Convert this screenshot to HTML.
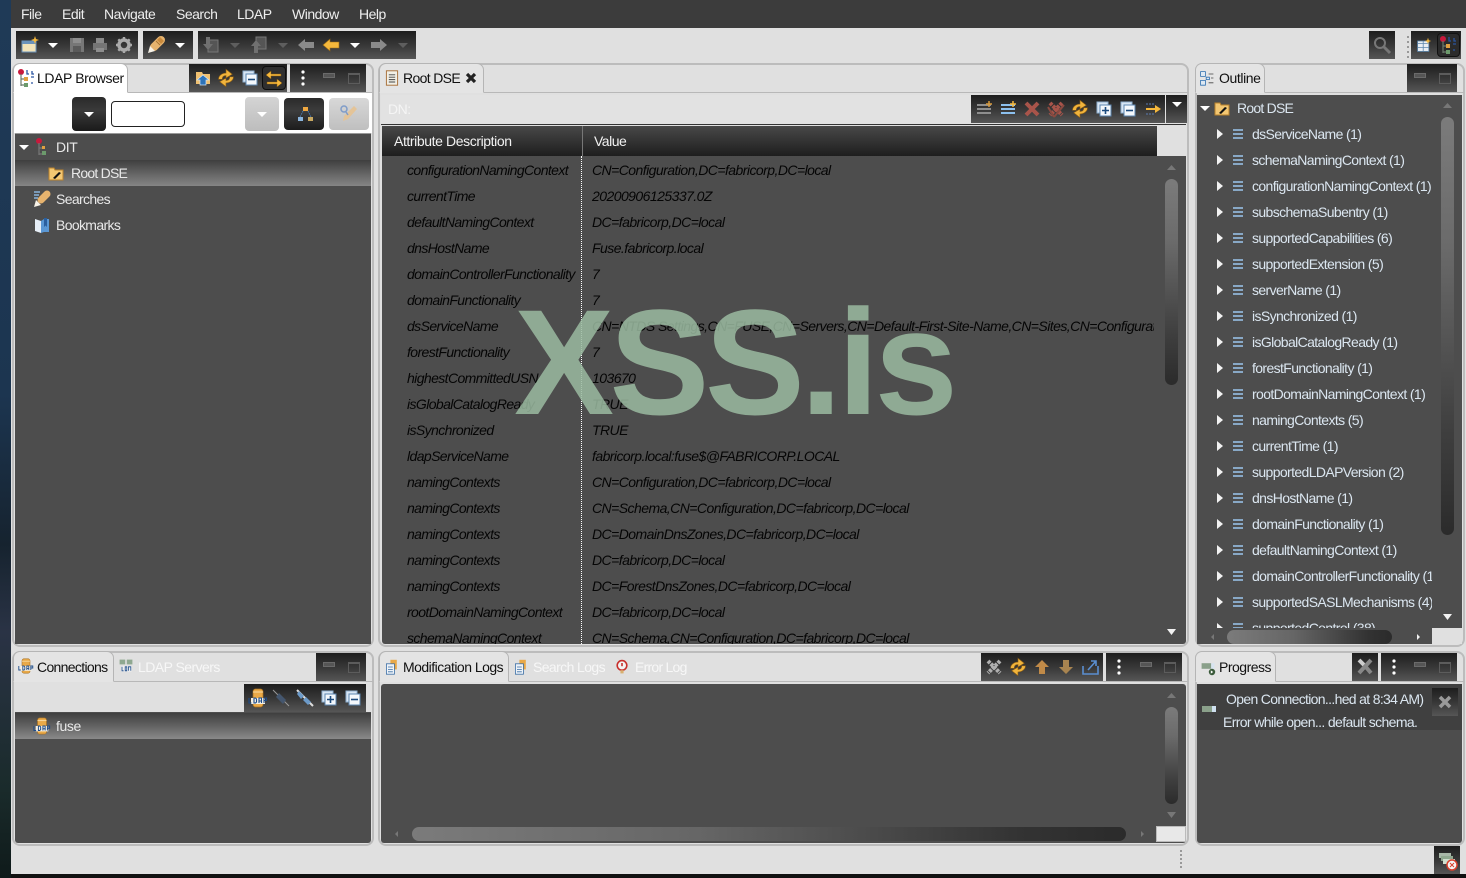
<!DOCTYPE html>
<html><head><meta charset="utf-8"><title>Apache Directory Studio</title>
<style>
html,body{margin:0;padding:0;width:1466px;height:878px;overflow:hidden;background:#111}
body{position:relative;font:14px/26px "Liberation Sans",sans-serif;letter-spacing:-.5px}
div,span,svg{position:absolute}
span{white-space:nowrap;height:26px}
.wall{left:0;top:0;width:11px;height:878px;background:linear-gradient(#1f3a57 0,#1c3550 45%,#16232f 62%,#2a3345 72%,#1a2b2b 90%,#0f1a1a 100%)}
.win{left:11px;top:0;width:1455px;height:874px;background:#e0e0e0}
.menu{left:11px;top:0;width:1455px;height:28px;background:#3c3c3c}
.m{color:#eee;top:1px}
.tb{background:linear-gradient(#1d1d1d,#3a3a3a 55%,#565656)}
.pn{border:2px solid #bcbcbc;border-radius:8px;box-sizing:border-box;background:#e0e0e0}
.tab{background:#e4e4e4;border:1px solid #b5b5b5;border-bottom:0;border-radius:7px 7px 0 0;box-sizing:border-box}
.line{background:#b8b8b8;height:1px}
.dk{background:#4d4d4d}
.k{color:#111;letter-spacing:-.6px}
.w{color:#e9e9e9;letter-spacing:-.65px}
.o{color:#dbe6f0;letter-spacing:-.62px}
.n{color:#050505;font-style:italic;left:407px;letter-spacing:-.6px}
.v{color:#050505;font-style:italic;left:592px;letter-spacing:-.55px}
.mn{width:10px;height:3px;border:1px solid #6a6a6a;background:#555}
.mx{width:10px;height:8px;border:1px solid #5c5c5c;border-top:2px solid #5c5c5c}
.sv{background:linear-gradient(#7b7b7b,#6b6b6b 30%,#3f3f3f 75%,#2b2b2b);border-radius:7px;width:13px}
.sh{background:linear-gradient(90deg,#7b7b7b,#666 40%,#333 85%,#2b2b2b);border-radius:7px;height:14px}
.ic{width:20px;height:20px;overflow:visible}
.s16{width:16px;height:16px}
.clip{overflow:hidden}
</style></head><body>
<svg width="0" height="0" style="left:0;top:0">
<defs>
<symbol id="dn" viewBox="0 0 20 20"><path d="M5 8h10l-5 5z" fill="#fff"/></symbol>
<symbol id="dg" viewBox="0 0 20 20"><path d="M5 8h10l-5 5z" fill="#5e5e5e"/></symbol>
<symbol id="rt" viewBox="0 0 20 20"><path d="M7 5l6 5-6 5z" fill="#f2f2f2"/></symbol>
<symbol id="ls" viewBox="0 0 20 20"><path d="M5 6h10M5 10h10M5 14h10" stroke="#9cc7ee" stroke-width="1.600"/></symbol>
<symbol id="fold" viewBox="0 0 20 20"><path d="M3 5h5l1 2h8v10H3z" fill="#f3c772" stroke="#b9822c"/><path d="M7 15l6-6 2 1-6 6z" fill="#111"/></symbol>
<symbol id="sync" viewBox="2 2 16 16"><path d="M4 11c0-3 3-5 6-5V3l5 4-5 3V8c-2 0-3 1-3 3zM16 9c0 3-3 5-6 5v3l-5-4 5-3v2c2 0 3-1 3-3z" fill="#f1b43c" stroke="#8a5c14" stroke-width=".5"/></symbol>
<symbol id="col" viewBox="0 0 20 20"><rect x="3" y="3" width="11" height="11" fill="#d8e6f4" stroke="#8fb0d0"/><rect x="6" y="6" width="11" height="11" fill="#f4f8fc" stroke="#5c86b0"/><path d="M8 11.500h7" stroke="#1c4b7e" stroke-width="1.600"/></symbol>
<symbol id="exp" viewBox="0 0 20 20"><rect x="3" y="3" width="11" height="11" fill="#d8e6f4" stroke="#8fb0d0"/><rect x="6" y="6" width="11" height="11" fill="#f4f8fc" stroke="#5c86b0"/><path d="M8 11.500h7M11.500 8v7" stroke="#1c4b7e" stroke-width="1.600"/></symbol>
<symbol id="vd" viewBox="0 0 6 20"><circle cx="3" cy="4" r="1.600" fill="#fff"/><circle cx="3" cy="10" r="1.600" fill="#fff"/><circle cx="3" cy="16" r="1.600" fill="#fff"/></symbol>
<symbol id="pen" viewBox="0 0 20 20"><path d="M15 5L8 12" stroke="#e6b36e" stroke-width="8" stroke-linecap="round"/><path d="M14 2l4 4-3 3-4-4z" fill="#c98a3c"/><path d="M4 11l5 5-7 2z" fill="#f7f2e8"/><path d="M10 6l4 4" stroke="#a87432"/></symbol>
<symbol id="ld" viewBox="0 0 20 20"><circle cx="5" cy="4" r="3" fill="#c8193c"/><path d="M5 6v12M5 11h6M5 17h5" stroke="#6b7a6b" stroke-width="1.200" fill="none"/><rect x="8" y="9" width="4" height="4" fill="#e0a040"/><rect x="8" y="15" width="4" height="4" fill="#6c9a6c"/><path d="M11 2v4h2M16 3v3h2M15 9h3M15 15h2" stroke="#2a55a0" stroke-width="1.300" fill="none"/></symbol>
<symbol id="arL" viewBox="0 0 20 20"><path d="M2 10l7-6v3h9v6H9v3z" fill="#f5b83c" stroke="#9a6a14" stroke-width=".6"/></symbol>
<symbol id="arLg" viewBox="0 0 20 20"><path d="M2 10l7-6v3h9v6H9v3z" fill="#8a8a8a"/></symbol>
<symbol id="arRg" viewBox="0 0 20 20"><path d="M18 10l-7-6v3H2v6h9v3z" fill="#8a8a8a"/></symbol>
<symbol id="doc" viewBox="0 0 20 20"><rect x="3" y="1" width="14" height="18" fill="#f1efe6" stroke="#a8703a" stroke-width="1.200"/><path d="M6 6h8M6 9h8M6 12h8M6 15h8" stroke="#444" stroke-width="1.200"/></symbol>
<symbol id="db" viewBox="0 0 20 20"><rect x="5" y="1" width="10" height="18" rx="2.500" fill="#e9a948" stroke="#a86f1e" stroke-width=".7"/><path d="M5 4h10" stroke="#f8dca6"/><rect x="3" y="10" width="14" height="6" fill="#f5f0e4"/><path d="M1 10v5h2.500M6 10v5h1.500l1-1v-3l-1-1zM11 15v-5h2.500v5M11 13h2.500M16 15v-5h2.500v2.500H16" stroke="#1c4b8a" stroke-width="1.100" fill="none"/></symbol>
</defs></svg>

<div class="wall"></div>
<div class="win"></div>
<div class="menu"></div>
<span class="m" style="left:21px">File</span><span class="m" style="left:62px">Edit</span><span class="m" style="left:104px">Navigate</span><span class="m" style="left:176px">Search</span><span class="m" style="left:237px">LDAP</span><span class="m" style="left:292px">Window</span><span class="m" style="left:359px">Help</span>

<!-- main toolbar -->
<div class="tb" style="left:16px;top:31px;width:122px;height:28px"></div>
<div class="tb" style="left:143px;top:31px;width:50px;height:28px"></div>
<div class="tb" style="left:198px;top:31px;width:218px;height:28px"></div>
<svg class="ic" style="left:20px;top:35px" viewBox="0 0 20 20"><rect x="2" y="6" width="14" height="11" fill="#f2e3b8" stroke="#6b93bb"/><path d="M2 6h14v3H2z" fill="#6b93bb"/><path d="M15 1l1 3 3 1-3 1-1 3-1-3-3-1 3-1z" fill="#f5b83c"/></svg>
<svg class="ic" style="left:43px;top:35px"><use href="#dn"/></svg>
<svg class="ic" style="left:67px;top:35px" viewBox="0 0 20 20"><path d="M3 3h14v14H3z" fill="#777"/><rect x="6" y="3" width="8" height="5" fill="#8e8e8e"/><rect x="6" y="11" width="8" height="6" fill="#5a5a5a"/></svg>
<svg class="ic" style="left:90px;top:35px" viewBox="0 0 20 20"><path d="M6 3h8v5H6z" fill="#8a8a8a"/><path d="M3 8h14v7H3z" fill="#757575"/><path d="M6 13h8v4H6z" fill="#8e8e8e"/></svg>
<svg class="ic" style="left:114px;top:35px" viewBox="0 0 20 20"><circle cx="10" cy="10" r="5" fill="none" stroke="#aaa" stroke-width="3.500"/><path d="M10 2v3M10 15v3M2 10h3M15 10h3M4.300 4.300l2 2M13.700 13.700l2 2M4.300 15.700l2-2M13.700 6.300l2-2" stroke="#aaa" stroke-width="2.400"/></svg>
<svg class="ic" style="left:146px;top:35px"><use href="#pen"/></svg>
<svg class="ic" style="left:170px;top:35px"><use href="#dn"/></svg>
<svg class="ic" style="left:201px;top:35px" viewBox="0 0 20 20"><rect x="7" y="5" width="10" height="12" fill="#555" stroke="#777"/><path d="M5 2h4v7h3l-5 6-5-6h3z" fill="#707070"/></svg>
<svg class="ic" style="left:225px;top:35px"><use href="#dg"/></svg>
<svg class="ic" style="left:249px;top:35px" viewBox="0 0 20 20"><rect x="7" y="2" width="10" height="12" fill="#555" stroke="#777"/><path d="M5 18v-7H2l5-6 5 6H9v7z" fill="#707070"/></svg>
<svg class="ic" style="left:273px;top:35px"><use href="#dg"/></svg>
<svg class="ic" style="left:296px;top:35px"><use href="#arLg"/></svg>
<svg class="ic" style="left:321px;top:35px"><use href="#arL"/></svg>
<svg class="ic" style="left:345px;top:35px"><use href="#dn"/></svg>
<svg class="ic" style="left:369px;top:35px"><use href="#arRg"/></svg>
<svg class="ic" style="left:393px;top:35px"><use href="#dg"/></svg>
<div class="tb" style="left:1369px;top:31px;width:26px;height:28px"></div>
<svg class="ic" style="left:1372px;top:35px" viewBox="0 0 20 20"><circle cx="8" cy="8" r="5" fill="none" stroke="#777" stroke-width="2"/><path d="M12 12l6 6" stroke="#777" stroke-width="3"/></svg>
<div style="left:1407px;top:36px;width:2px;height:22px;background:repeating-linear-gradient(#999 0 2px,transparent 2px 5px)"></div>
<div class="tb" style="left:1411px;top:31px;width:50px;height:28px"></div>
<svg class="ic s16" style="left:1416px;top:37px" viewBox="0 0 20 20"><rect x="2" y="5" width="14" height="13" fill="#e8eef4" stroke="#5d87ad"/><path d="M2 8h14M9 5v13M2 13h14" stroke="#5d87ad"/><path d="M15 1l1 3 3 1-3 1-1 3-1-3-3-1 3-1z" fill="#f5b83c"/></svg>
<div style="left:1437px;top:33px;width:23px;height:24px;border:1px solid #111;border-radius:4px;box-sizing:border-box;background:#2b2b2b"></div>
<svg class="ic" style="left:1438px;top:35px"><use href="#ld"/></svg>

<!-- LEFT TOP -->
<div class="pn" style="left:12px;top:63px;width:362px;height:584px"></div>
<div style="left:14px;top:93px;width:358px;height:40px;background:#fff"></div>
<div class="line" style="left:127px;top:92px;width:246px"></div>
<div class="tab" style="left:13px;top:63px;width:115px;height:30px;background:#fff;border-bottom:1px solid #fff"></div>
<svg class="ic" style="left:16px;top:68px"><use href="#ld"/></svg>
<span class="k" style="left:37px;top:65px;letter-spacing:-.4px">LDAP Browser</span>
<div class="tb" style="left:189px;top:64px;width:98px;height:28px"></div>
<div class="tb" style="left:290px;top:64px;width:76px;height:28px"></div>
<svg class="ic" style="left:193px;top:68px" viewBox="0 0 20 20"><path d="M3 4h6l1 2h7v10H3z" fill="#f0c070"/><path d="M10 7l6 5h-3v5H7v-5H4z" fill="#2e73b8" stroke="#cfe3f6" stroke-width=".7"/></svg>
<svg class="ic" style="left:216px;top:68px"><use href="#sync"/></svg>
<svg class="ic" style="left:240px;top:68px"><use href="#col"/></svg>
<div style="left:262px;top:66px;width:24px;height:24px;border:1px solid #0d0d0d;border-radius:4px;box-sizing:border-box;background:#2f2f2f"></div>
<svg class="ic" style="left:264px;top:68px" viewBox="0 0 20 20"><path d="M17 6H7V3L2 7l5 4V8h10zM3 14h10v-3l5 4-5 4v-3H3z" fill="#f5b83c" stroke="#80540c" stroke-width=".5"/></svg>
<svg style="left:300px;top:68px" width="6" height="20"><use href="#vd"/></svg>
<div class="mn" style="left:323px;top:73px"></div><div class="mx" style="left:348px;top:73px"></div>

<div style="left:72px;top:97px;width:34px;height:34px;border-radius:4px;background:linear-gradient(#2a2a2a,#3a3a3a 40%,#1a1a1a)"></div>
<svg class="ic" style="left:79px;top:104px"><use href="#dn"/></svg>
<div style="left:111px;top:101px;width:74px;height:26px;background:#fff;border:1px solid #222;border-radius:4px;box-sizing:border-box"></div>
<div style="left:245px;top:97px;width:34px;height:34px;border-radius:4px;background:linear-gradient(#d4d4d4,#bdbdbd)"></div>
<svg class="ic" style="left:252px;top:104px"><use href="#dn"/></svg>
<div style="left:284px;top:98px;width:40px;height:32px;border-radius:4px;background:linear-gradient(#2a2a2a,#3c3c3c 40%,#1c1c1c)"></div>
<svg class="ic" style="left:295px;top:104px" viewBox="0 0 20 20"><rect x="8" y="3" width="5" height="4" fill="#f0a840"/><rect x="3" y="13" width="5" height="4" fill="#8ab4dc"/><rect x="13" y="13" width="5" height="4" fill="#c8a860"/><path d="M8 7l-3 6M13 7l3 6" stroke="#4a7ab0" stroke-dasharray="1.500 1"/></svg>
<div style="left:329px;top:98px;width:40px;height:32px;border-radius:4px;background:linear-gradient(#d8d8d8,#bfbfbf)"></div>
<svg class="ic" style="left:339px;top:104px" viewBox="0 0 20 20"><path d="M15 2l3 3-9 10-5 2 1-5z" fill="#e4c498"/><circle cx="5" cy="5" r="3" fill="none" stroke="#7f9cc8" stroke-width="1.500"/><path d="M7 8l2 3" stroke="#7f9cc8" stroke-width="1.500"/></svg>

<div class="dk" style="left:15px;top:133px;width:356px;height:511px;border-top:1px solid #999;box-sizing:border-box"></div>
<div style="left:15px;top:160px;width:356px;height:26px;background:linear-gradient(#3f3f3f,#6a6a6a 60%,#858585)"></div>
<svg class="ic" style="left:14px;top:137px"><use href="#dn"/></svg>
<svg class="ic" style="left:32px;top:137px" viewBox="0 0 20 20"><circle cx="7" cy="4" r="3" fill="#c8193c"/><path d="M7 6v12M7 11h5M7 17h4" stroke="#777" stroke-width="1.200"/><rect x="10" y="9" width="3" height="3" fill="#e0a040"/><rect x="10" y="14" width="4" height="4" fill="#6c9a6c"/></svg>
<span class="w" style="left:56px;top:134px;letter-spacing:-.4px">DIT</span>
<svg class="ic" style="left:46px;top:163px"><use href="#fold"/></svg>
<span class="w" style="left:71px;top:160px;letter-spacing:-.77px">Root DSE</span>
<svg class="ic" style="left:32px;top:189px" viewBox="0 0 20 20"><path d="M2 3h6M2 6h5M2 9h4" stroke="#8ab4dc" stroke-width="1.400"/><path d="M15 5L9 11" stroke="#e6b36e" stroke-width="7" stroke-linecap="round"/><path d="M4 11l5 5-7 2z" fill="#f7f2e8"/></svg>
<span class="w" style="left:56px;top:186px">Searches</span>
<svg class="ic" style="left:32px;top:215px" viewBox="0 0 20 20"><path d="M3 4l6 2v12l-6-2z" fill="#e6eef6"/><path d="M9 6l3-2h5v13h-5l-3 1z" fill="#5a97d4"/><path d="M12 3h3v9l-1.500-1.500L12 12z" fill="#2a5f9e"/></svg>
<span class="w" style="left:56px;top:212px">Bookmarks</span>

<!-- CENTER TOP -->
<div class="pn" style="left:378px;top:63px;width:811px;height:584px"></div>
<div class="line" style="left:483px;top:92px;width:705px"></div>
<div class="tab" style="left:379px;top:63px;width:105px;height:30px;border-bottom:1px solid #e4e4e4"></div>
<svg class="ic s16" style="left:384px;top:70px"><use href="#doc"/></svg>
<span class="k" style="left:403px;top:65px;letter-spacing:-.65px">Root DSE</span>
<svg class="ic s16" style="left:463px;top:70px" viewBox="0 0 20 20"><path d="M5 5l10 10M15 5L5 15" stroke="#222" stroke-width="4"/></svg>
<div style="left:381px;top:95px;width:805px;height:29px;background:#e2e2e2"></div>
<span style="left:388px;top:96px;color:#f5f5f5">DN:</span>
<div style="left:381px;top:124px;width:805px;height:1px;background:#333"></div>
<div class="tb" style="left:971px;top:95px;width:194px;height:28px"></div>
<div class="tb" style="left:1166px;top:95px;width:21px;height:28px"></div>
<svg class="ic" style="left:974px;top:99px" viewBox="0 0 20 20"><path d="M3 6h14M3 10h14M3 14h14" stroke="#8e8e8e" stroke-width="2"/><path d="M15 2v6M12 5h6" stroke="#d89a3c" stroke-width="1.500"/></svg>
<svg class="ic" style="left:998px;top:99px" viewBox="0 0 20 20"><path d="M3 6h14M3 10h14M3 14h14" stroke="#8cc0ee" stroke-width="2"/><path d="M15 2v6M12 5h6" stroke="#f5b83c" stroke-width="1.500"/></svg>
<svg class="ic" style="left:1022px;top:99px" viewBox="0 0 20 20"><path d="M4 4l12 12M16 4L4 16" stroke="#a8544a" stroke-width="4"/></svg>
<svg class="ic" style="left:1046px;top:99px" viewBox="0 0 20 20"><path d="M4 4l12 12M16 4L4 16" stroke="#a8544a" stroke-width="4" stroke-dasharray="3 1"/><path d="M2 8l6 10M18 6L8 18" stroke="#8a4a40" stroke-width="2"/></svg>
<svg class="ic" style="left:1070px;top:99px"><use href="#sync"/></svg>
<svg class="ic" style="left:1094px;top:99px"><use href="#exp"/></svg>
<svg class="ic" style="left:1118px;top:99px"><use href="#col"/></svg>
<svg class="ic" style="left:1143px;top:99px" viewBox="0 0 20 20"><path d="M3 5h8M3 15h8" stroke="#5a7ab0" stroke-dasharray="2 1"/><path d="M3 9h9V6l6 4-6 4v-3H3z" fill="#f5b83c"/></svg>
<svg class="ic" style="left:1167px;top:94px"><use href="#dn"/></svg>

<div style="left:381px;top:125px;width:805px;height:519px;background:#e0e0e0;border-radius:3px"></div>
<div style="left:382px;top:126px;width:775px;height:30px;background:linear-gradient(#484848,#1e1e1e)"></div>
<div style="left:582px;top:126px;width:1px;height:30px;background:#777"></div>
<span style="left:394px;top:128px;color:#f2f2f2;letter-spacing:-.4px">Attribute Description</span>
<span style="left:594px;top:128px;color:#f2f2f2">Value</span>
<div class="dk clip" style="left:382px;top:156px;width:804px;height:488px;border-radius:0 0 3px 3px">
<div style="left:199px;top:0;width:0;height:488px;border-left:1px dotted #fff"></div>
</div>
<div class="clip" style="left:0;top:156px;width:1466px;height:488px">
<div style="left:0;top:-156px;width:1466px;height:878px">
<span class="n" style="top:157px">configurationNamingContext</span><span class="v" style="top:157px">CN=Configuration,DC=fabricorp,DC=local</span>
<span class="n" style="top:183px">currentTime</span><span class="v" style="top:183px">20200906125337.0Z</span>
<span class="n" style="top:209px">defaultNamingContext</span><span class="v" style="top:209px">DC=fabricorp,DC=local</span>
<span class="n" style="top:235px">dnsHostName</span><span class="v" style="top:235px">Fuse.fabricorp.local</span>
<span class="n" style="top:261px">domainControllerFunctionality</span><span class="v" style="top:261px">7</span>
<span class="n" style="top:287px">domainFunctionality</span><span class="v" style="top:287px">7</span>
<span class="n" style="top:313px">dsServiceName</span>
<div class="clip" style="left:592px;top:313px;width:562px;height:26px"><span class="v" style="left:0;top:0">CN=NTDS Settings,CN=FUSE,CN=Servers,CN=Default-First-Site-Name,CN=Sites,CN=Configuration,DC=fabricorp,DC=local</span></div>
<span class="n" style="top:339px">forestFunctionality</span><span class="v" style="top:339px">7</span>
<span class="n" style="top:365px">highestCommittedUSN</span><span class="v" style="top:365px">103670</span>
<span class="n" style="top:391px">isGlobalCatalogReady</span><span class="v" style="top:391px">TRUE</span>
<span class="n" style="top:417px">isSynchronized</span><span class="v" style="top:417px">TRUE</span>
<span class="n" style="top:443px">ldapServiceName</span><span class="v" style="top:443px">fabricorp.local:fuse$@FABRICORP.LOCAL</span>
<span class="n" style="top:469px">namingContexts</span><span class="v" style="top:469px">CN=Configuration,DC=fabricorp,DC=local</span>
<span class="n" style="top:495px">namingContexts</span><span class="v" style="top:495px">CN=Schema,CN=Configuration,DC=fabricorp,DC=local</span>
<span class="n" style="top:521px">namingContexts</span><span class="v" style="top:521px">DC=DomainDnsZones,DC=fabricorp,DC=local</span>
<span class="n" style="top:547px">namingContexts</span><span class="v" style="top:547px">DC=fabricorp,DC=local</span>
<span class="n" style="top:573px">namingContexts</span><span class="v" style="top:573px">DC=ForestDnsZones,DC=fabricorp,DC=local</span>
<span class="n" style="top:599px">rootDomainNamingContext</span><span class="v" style="top:599px">DC=fabricorp,DC=local</span>
<span class="n" style="top:625px">schemaNamingContext</span><span class="v" style="top:625px">CN=Schema,CN=Configuration,DC=fabricorp,DC=local</span>
</div></div>
<svg style="left:1166px;top:164px" width="11" height="8"><path d="M1 6h9L5.500 1z" fill="#777"/></svg>
<div class="sv" style="left:1165px;top:179px;height:206px"></div>
<svg style="left:1166px;top:628px" width="11" height="8"><path d="M1 1h9L5.500 7z" fill="#f2f2f2"/></svg>

<!-- RIGHT TOP -->
<div class="pn" style="left:1195px;top:63px;width:270px;height:584px"></div>
<div class="line" style="left:1264px;top:92px;width:200px"></div>
<div class="tab" style="left:1195px;top:63px;width:70px;height:30px;border-bottom:1px solid #e4e4e4"></div>
<svg class="ic s16" style="left:1199px;top:70px" viewBox="0 0 20 20"><path d="M2 2h6v6H2zM2 13h6v6H2z" fill="#dde8f2" stroke="#2d6fb0"/><path d="M9 9h4v3H9z" fill="#dde8f2" stroke="#2d6fb0"/><path d="M12 5h6M15 10h3M12 16h6" stroke="#444"/></svg>
<span class="k" style="left:1219px;top:65px;letter-spacing:-.4px">Outline</span>
<div class="tb" style="left:1407px;top:64px;width:50px;height:28px"></div>
<div class="mn" style="left:1414px;top:73px"></div><div class="mx" style="left:1439px;top:73px"></div>
<div class="dk clip" style="left:1197px;top:95px;width:265px;height:549px">
<svg class="ic" style="left:-2px;top:3px"><use href="#dn"/></svg>
<svg class="ic" style="left:15px;top:3px"><use href="#fold"/></svg>
<span class="o" style="left:40px;top:0;letter-spacing:-.77px">Root DSE</span>
</div>
<div class="clip" style="left:1210px;top:121px;width:222px;height:507px;">
<div style="left:-1210px;top:-121px;width:1466px;height:878px">
<svg class="ic" style="left:1210px;top:124px"><use href="#rt"/></svg><svg class="ic" style="left:1228px;top:124px"><use href="#ls"/></svg><span class="o" style="left:1252px;top:121px">dsServiceName (1)</span>
<svg class="ic" style="left:1210px;top:150px"><use href="#rt"/></svg><svg class="ic" style="left:1228px;top:150px"><use href="#ls"/></svg><span class="o" style="left:1252px;top:147px">schemaNamingContext (1)</span>
<svg class="ic" style="left:1210px;top:176px"><use href="#rt"/></svg><svg class="ic" style="left:1228px;top:176px"><use href="#ls"/></svg><span class="o" style="left:1252px;top:173px">configurationNamingContext (1)</span>
<svg class="ic" style="left:1210px;top:202px"><use href="#rt"/></svg><svg class="ic" style="left:1228px;top:202px"><use href="#ls"/></svg><span class="o" style="left:1252px;top:199px">subschemaSubentry (1)</span>
<svg class="ic" style="left:1210px;top:228px"><use href="#rt"/></svg><svg class="ic" style="left:1228px;top:228px"><use href="#ls"/></svg><span class="o" style="left:1252px;top:225px">supportedCapabilities (6)</span>
<svg class="ic" style="left:1210px;top:254px"><use href="#rt"/></svg><svg class="ic" style="left:1228px;top:254px"><use href="#ls"/></svg><span class="o" style="left:1252px;top:251px">supportedExtension (5)</span>
<svg class="ic" style="left:1210px;top:280px"><use href="#rt"/></svg><svg class="ic" style="left:1228px;top:280px"><use href="#ls"/></svg><span class="o" style="left:1252px;top:277px">serverName (1)</span>
<svg class="ic" style="left:1210px;top:306px"><use href="#rt"/></svg><svg class="ic" style="left:1228px;top:306px"><use href="#ls"/></svg><span class="o" style="left:1252px;top:303px">isSynchronized (1)</span>
<svg class="ic" style="left:1210px;top:332px"><use href="#rt"/></svg><svg class="ic" style="left:1228px;top:332px"><use href="#ls"/></svg><span class="o" style="left:1252px;top:329px">isGlobalCatalogReady (1)</span>
<svg class="ic" style="left:1210px;top:358px"><use href="#rt"/></svg><svg class="ic" style="left:1228px;top:358px"><use href="#ls"/></svg><span class="o" style="left:1252px;top:355px">forestFunctionality (1)</span>
<svg class="ic" style="left:1210px;top:384px"><use href="#rt"/></svg><svg class="ic" style="left:1228px;top:384px"><use href="#ls"/></svg><span class="o" style="left:1252px;top:381px">rootDomainNamingContext (1)</span>
<svg class="ic" style="left:1210px;top:410px"><use href="#rt"/></svg><svg class="ic" style="left:1228px;top:410px"><use href="#ls"/></svg><span class="o" style="left:1252px;top:407px">namingContexts (5)</span>
<svg class="ic" style="left:1210px;top:436px"><use href="#rt"/></svg><svg class="ic" style="left:1228px;top:436px"><use href="#ls"/></svg><span class="o" style="left:1252px;top:433px">currentTime (1)</span>
<svg class="ic" style="left:1210px;top:462px"><use href="#rt"/></svg><svg class="ic" style="left:1228px;top:462px"><use href="#ls"/></svg><span class="o" style="left:1252px;top:459px">supportedLDAPVersion (2)</span>
<svg class="ic" style="left:1210px;top:488px"><use href="#rt"/></svg><svg class="ic" style="left:1228px;top:488px"><use href="#ls"/></svg><span class="o" style="left:1252px;top:485px">dnsHostName (1)</span>
<svg class="ic" style="left:1210px;top:514px"><use href="#rt"/></svg><svg class="ic" style="left:1228px;top:514px"><use href="#ls"/></svg><span class="o" style="left:1252px;top:511px">domainFunctionality (1)</span>
<svg class="ic" style="left:1210px;top:540px"><use href="#rt"/></svg><svg class="ic" style="left:1228px;top:540px"><use href="#ls"/></svg><span class="o" style="left:1252px;top:537px">defaultNamingContext (1)</span>
<svg class="ic" style="left:1210px;top:566px"><use href="#rt"/></svg><svg class="ic" style="left:1228px;top:566px"><use href="#ls"/></svg><span class="o" style="left:1252px;top:563px">domainControllerFunctionality (1)</span>
<svg class="ic" style="left:1210px;top:592px"><use href="#rt"/></svg><svg class="ic" style="left:1228px;top:592px"><use href="#ls"/></svg><span class="o" style="left:1252px;top:589px">supportedSASLMechanisms (4)</span>
<svg class="ic" style="left:1210px;top:618px"><use href="#rt"/></svg><svg class="ic" style="left:1228px;top:618px"><use href="#ls"/></svg><span class="o" style="left:1252px;top:615px">supportedControl (38)</span>
</div></div>
<svg style="left:1442px;top:102px" width="11" height="8"><path d="M1 6h9L5.500 1z" fill="#777"/></svg>
<div class="sv" style="left:1441px;top:117px;height:418px"></div>
<svg style="left:1442px;top:613px" width="11" height="8"><path d="M1 1h9L5.500 7z" fill="#f2f2f2"/></svg>
<div style="left:1197px;top:628px;width:235px;height:16px;background:#4d4d4d"></div>
<div class="sh" style="left:1227px;top:630px;width:165px"></div>
<svg style="left:1210px;top:633px" width="6" height="8"><path d="M4 1v6L1 4z" fill="#777"/></svg>
<svg style="left:1415px;top:633px" width="6" height="8"><path d="M2 1v6l3-3z" fill="#f2f2f2"/></svg>
<div style="left:1432px;top:628px;width:30px;height:16px;background:#e0e0e0"></div>

<!-- BOTTOM LEFT -->
<div class="pn" style="left:12px;top:651px;width:362px;height:195px"></div>
<div class="line" style="left:113px;top:681px;width:260px"></div>
<div class="tab" style="left:13px;top:651px;width:101px;height:31px;border-bottom:1px solid #e4e4e4"></div>
<svg class="ic s16" style="left:18px;top:658px"><use href="#db"/></svg>
<span class="k" style="left:37px;top:654px;letter-spacing:-.67px">Connections</span>
<svg class="ic s16" style="left:118px;top:658px" viewBox="0 0 20 20"><rect x="2" y="2" width="7" height="6" fill="#8fa890"/><rect x="11" y="2" width="7" height="6" fill="#8fa890"/><rect x="4" y="10" width="13" height="7" fill="#eee"/><path d="M5 11v5h2M9 11h2v5H9zM13 16v-5h3v5" stroke="#1c4b8a" fill="none"/></svg>
<span style="left:138px;top:654px;color:#f7f7f7;letter-spacing:-.55px">LDAP Servers</span>
<div class="tb" style="left:316px;top:653px;width:50px;height:28px"></div>
<div class="mn" style="left:323px;top:662px"></div><div class="mx" style="left:348px;top:662px"></div>
<div class="tb" style="left:244px;top:684px;width:122px;height:28px"></div>
<svg class="ic" style="left:248px;top:688px"><use href="#db"/></svg>
<svg class="ic" style="left:271px;top:688px" viewBox="0 0 20 20"><path d="M2 2l16 16" stroke="#999"/><path d="M8 5l7 7-3 4-7-7z" fill="#44566e"/></svg>
<svg class="ic" style="left:295px;top:688px" viewBox="0 0 20 20"><path d="M2 2l16 16" stroke="#ddd" stroke-width="2"/><path d="M4 3l5 5-3 3-4-5z" fill="#6c9ac8"/><path d="M11 9l5 5-3 3-5-5z" fill="#6c9ac8"/></svg>
<svg class="ic" style="left:319px;top:688px"><use href="#exp"/></svg>
<svg class="ic" style="left:343px;top:688px"><use href="#col"/></svg>
<div class="dk" style="left:15px;top:712px;width:356px;height:131px;border-radius:0 0 3px 3px"></div>
<div style="left:15px;top:713px;width:356px;height:26px;background:linear-gradient(#3f3f3f,#6a6a6a 60%,#8a8a8a)"></div>
<svg class="ic" style="left:33px;top:717px;width:18px;height:18px"><use href="#db"/></svg>
<span class="w" style="left:56px;top:713px;letter-spacing:-.4px">fuse</span>

<!-- BOTTOM CENTER -->
<div class="pn" style="left:378px;top:651px;width:811px;height:195px"></div>
<div class="line" style="left:508px;top:681px;width:680px"></div>
<div class="tab" style="left:379px;top:651px;width:130px;height:31px;border-bottom:1px solid #e4e4e4"></div>
<svg class="ic s16" style="left:384px;top:659px" viewBox="0 0 20 20"><rect x="8" y="1" width="8" height="12" fill="#e9a948"/><rect x="3" y="6" width="10" height="13" fill="#eef3f8" stroke="#3a6ea5"/><path d="M5 10h6M5 13h6M5 16h6" stroke="#3a6ea5"/></svg>
<span class="k" style="left:403px;top:654px;letter-spacing:-.52px">Modification Logs</span>
<svg class="ic s16" style="left:513px;top:659px" viewBox="0 0 20 20"><rect x="8" y="1" width="8" height="12" fill="#e9a948"/><rect x="3" y="6" width="10" height="13" fill="#eef3f8" stroke="#3a6ea5"/><path d="M5 10h6M5 13h6M5 16h6" stroke="#3a6ea5"/></svg>
<span style="left:533px;top:654px;color:#f7f7f7;letter-spacing:-.6px">Search Logs</span>
<svg class="ic s16" style="left:614px;top:659px" viewBox="0 0 20 20"><circle cx="10" cy="8" r="6" fill="#f3f3f3" stroke="#c8302c" stroke-width="2"/><path d="M8 14h4v4H8z" fill="#d8b070"/><path d="M10 5v4" stroke="#c8302c" stroke-width="2"/></svg>
<span style="left:635px;top:654px;color:#f7f7f7;letter-spacing:-.75px">Error Log</span>
<div class="tb" style="left:981px;top:653px;width:122px;height:28px"></div>
<div class="tb" style="left:1106px;top:653px;width:76px;height:28px"></div>
<svg class="ic" style="left:984px;top:657px" viewBox="0 0 20 20"><path d="M4 4l12 12M16 4L4 16" stroke="#b0b0b0" stroke-width="4" stroke-dasharray="3 1"/></svg>
<svg class="ic" style="left:1008px;top:657px"><use href="#sync"/></svg>
<svg class="ic" style="left:1032px;top:657px" viewBox="0 0 20 20"><path d="M10 3l7 7h-4v7H7v-7H3z" fill="#c08a48"/></svg>
<svg class="ic" style="left:1056px;top:657px" viewBox="0 0 20 20"><path d="M10 17l7-7h-4V3H7v7H3z" fill="#a88450"/></svg>
<svg class="ic" style="left:1080px;top:657px" viewBox="0 0 20 20"><path d="M3 9v8h15V9M8 13l8-9M11 4h5v5" fill="none" stroke="#5a8ed0" stroke-width="1.600"/></svg>
<svg style="left:1116px;top:657px" width="6" height="20"><use href="#vd"/></svg>
<div class="mn" style="left:1140px;top:662px"></div><div class="mx" style="left:1164px;top:662px"></div>
<div class="dk" style="left:381px;top:684px;width:805px;height:159px;border-radius:3px"></div>
<svg style="left:1166px;top:692px" width="11" height="8"><path d="M1 6h9L5.500 1z" fill="#777"/></svg>
<div class="sv" style="left:1165px;top:707px;height:97px"></div>
<svg style="left:1166px;top:811px" width="11" height="8"><path d="M1 1h9L5.500 7z" fill="#777"/></svg>
<div class="sh" style="left:412px;top:827px;width:714px"></div>
<svg style="left:394px;top:830px" width="6" height="8"><path d="M4 1v6L1 4z" fill="#777"/></svg>
<svg style="left:1139px;top:830px" width="6" height="8"><path d="M2 1v6l3-3z" fill="#777"/></svg>
<div style="left:1156px;top:826px;width:30px;height:16px;background:#e8e8e8;border:1px solid #bbb;box-sizing:border-box"></div>

<!-- BOTTOM RIGHT -->
<div class="pn" style="left:1195px;top:651px;width:270px;height:195px"></div>
<div class="line" style="left:1275px;top:681px;width:189px"></div>
<div class="tab" style="left:1195px;top:651px;width:81px;height:31px;border-bottom:1px solid #e4e4e4"></div>
<svg class="ic s16" style="left:1200px;top:660px" viewBox="0 0 20 20"><rect x="2" y="4" width="12" height="7" fill="#8aa08a"/><rect x="14" y="4" width="4" height="7" fill="#d8e4f0"/><circle cx="15" cy="15" r="4" fill="#3a5a3a"/><path d="M13.500 13l3 2-3 2z" fill="#fff"/></svg>
<span class="k" style="left:1219px;top:654px;letter-spacing:-.5px">Progress</span>
<div class="tb" style="left:1352px;top:653px;width:26px;height:28px"></div>
<svg class="ic" style="left:1355px;top:657px" viewBox="0 0 20 20"><path d="M4 3l6 6" stroke="#ccc" stroke-width="4"/><path d="M10 9l6 7M16 3L4 16" stroke="#888" stroke-width="4"/></svg>
<div class="tb" style="left:1381px;top:653px;width:76px;height:28px"></div>
<svg style="left:1391px;top:657px" width="6" height="20"><use href="#vd"/></svg>
<div class="mn" style="left:1414px;top:662px"></div><div class="mx" style="left:1439px;top:662px"></div>
<div class="dk" style="left:1197px;top:684px;width:265px;height:159px;border-radius:3px"></div>
<div style="left:1197px;top:684px;width:265px;height:46px;background:#404040"></div>
<svg class="ic" style="left:1198px;top:700px" viewBox="0 0 20 20"><rect x="4" y="6" width="10" height="6" fill="#8aa08a"/><rect x="14" y="6" width="4" height="6" fill="#cfe0f0"/></svg>
<span class="o" style="left:1226px;top:686px;letter-spacing:-.67px">Open Connection...hed at 8:34 AM)</span>
<span class="o" style="left:1223px;top:709px;letter-spacing:-.63px">Error while open... default schema.</span>
<div class="tb" style="left:1432px;top:688px;width:26px;height:28px"></div>
<svg class="ic" style="left:1435px;top:692px" viewBox="0 0 20 20"><path d="M5 5l10 10M15 5L5 15" stroke="#9a9a9a" stroke-width="3.500"/></svg>

<!-- STATUS -->
<div style="left:1180px;top:850px;width:2px;height:20px;background:repeating-linear-gradient(#999 0 2px,transparent 2px 4px)"></div>
<div class="tb" style="left:1434px;top:846px;width:26px;height:28px"></div>
<svg class="ic" style="left:1438px;top:851px" viewBox="0 0 20 20"><rect x="1" y="2" width="12" height="5" fill="#a8b8a8"/><rect x="3" y="5" width="12" height="5" fill="#8fa88f"/><rect x="5" y="8" width="12" height="5" fill="#cfe0cf"/><circle cx="14" cy="14" r="5" fill="#f5f5f5" stroke="#d8402c" stroke-width="1.500"/><path d="M12 12l4 4M16 12l-4 4" stroke="#d8402c"/></svg>

<!-- WATERMARK -->
<div style="left:514px;top:277px;font:bold 150px/170px 'Liberation Sans',sans-serif;letter-spacing:-4.6px;color:#9bbba1;opacity:.85;white-space:nowrap">XSS.is</div>
</body></html>
